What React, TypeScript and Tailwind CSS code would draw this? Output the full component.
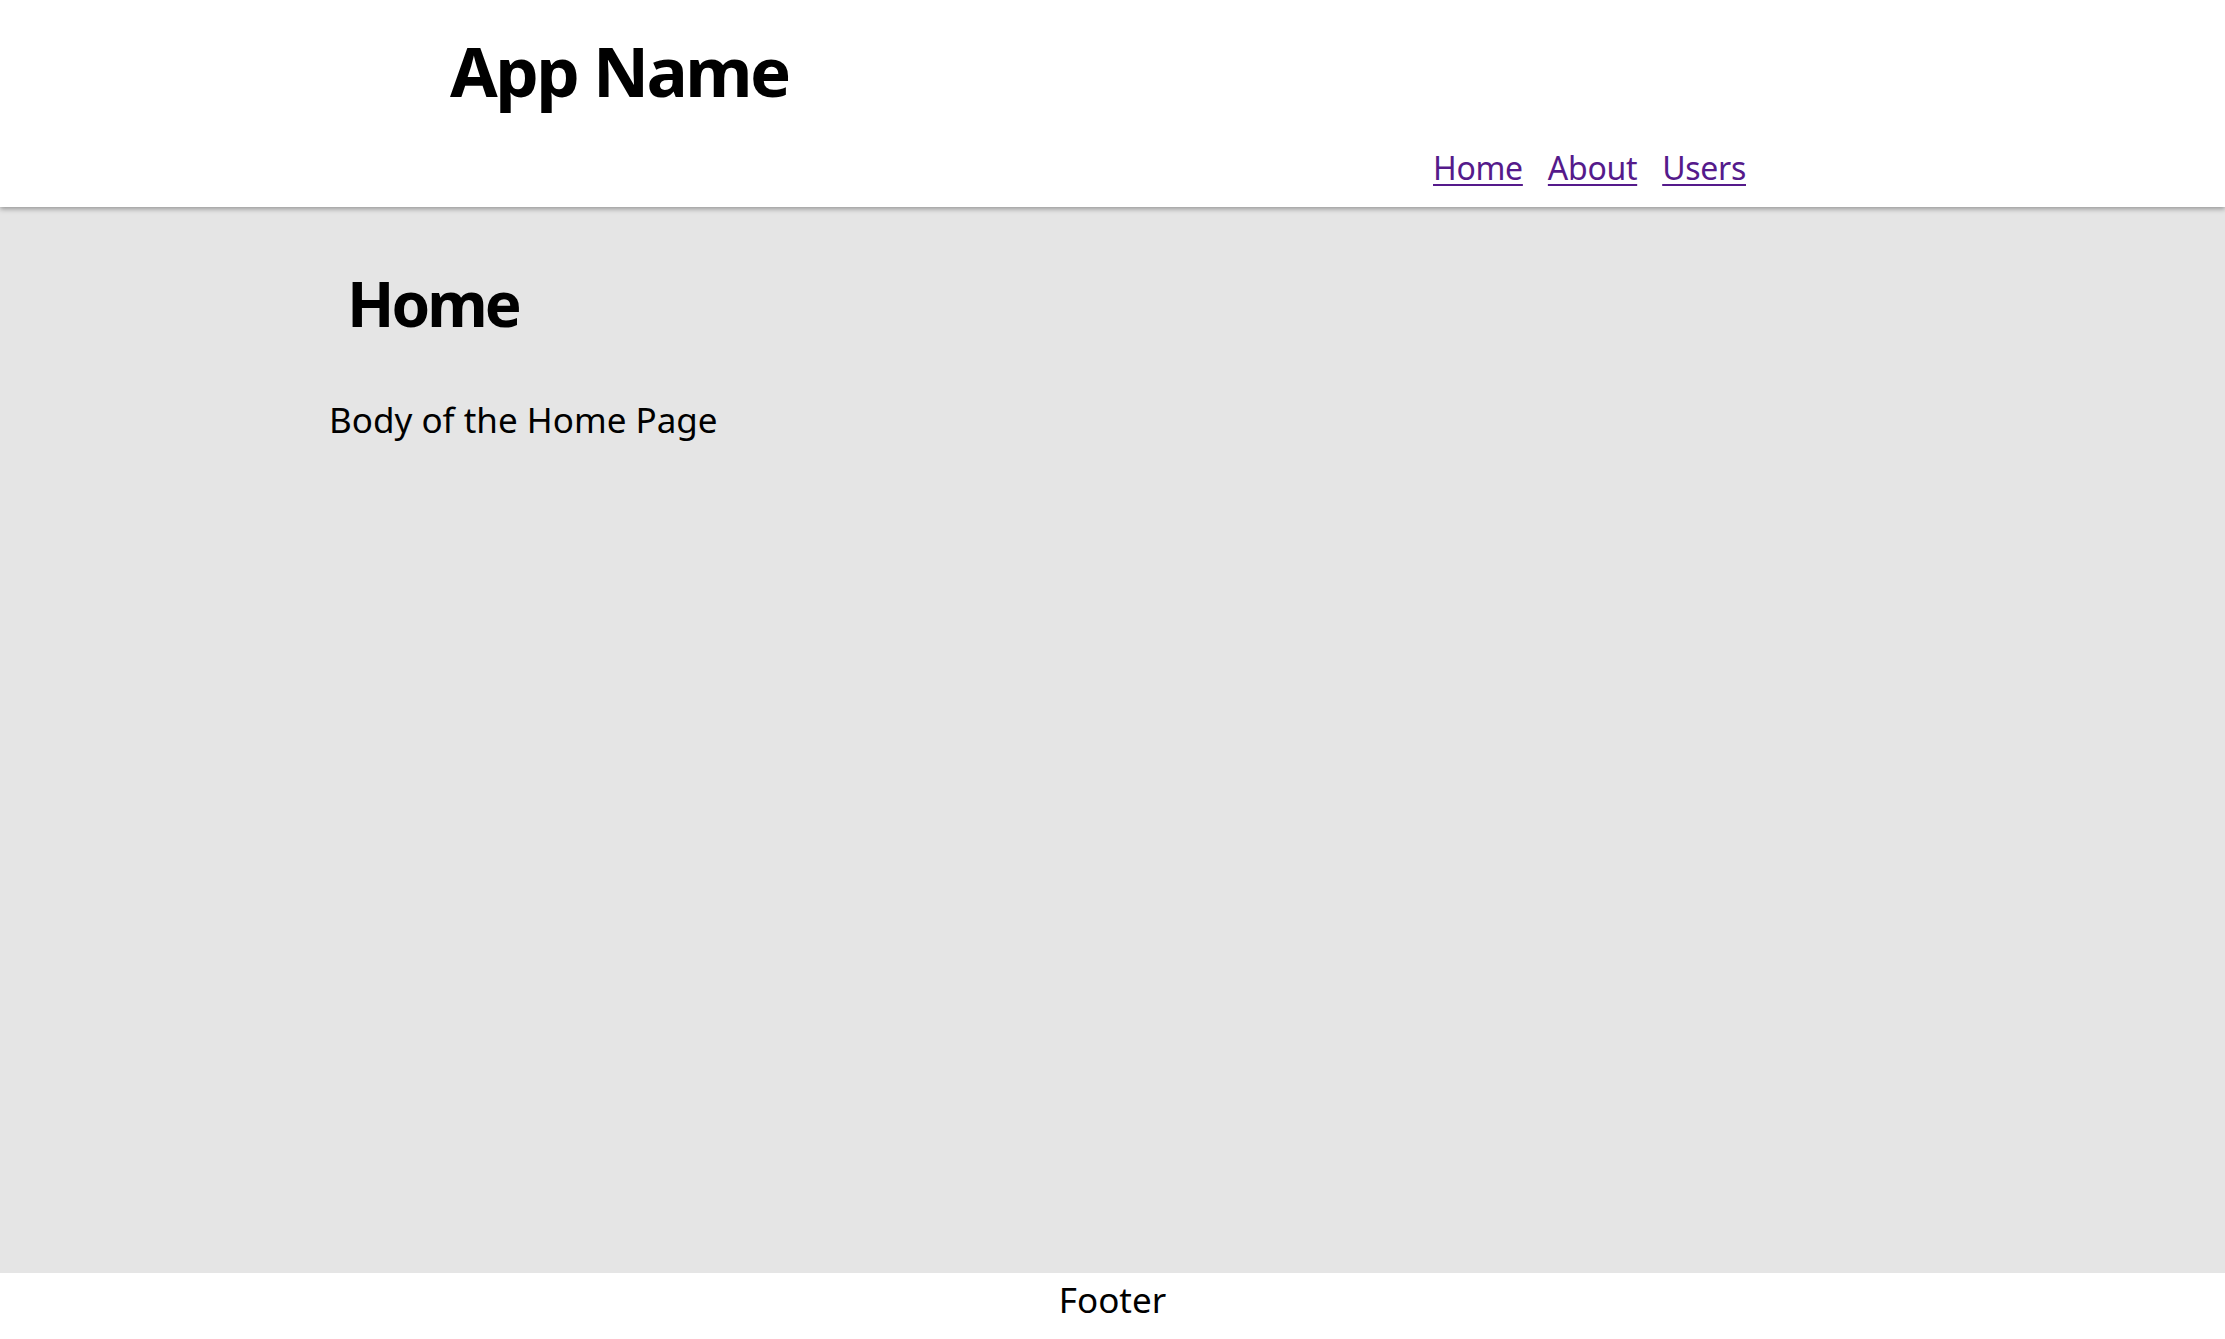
export default function App() {
  const links = ["Home", "About", "Users"];

  return (
    <div className="min-h-screen flex flex-col bg-white text-black font-['Noto_Sans','Segoe_UI',sans-serif]">
      {/* Header */}
      <header className="relative z-10 h-[207px] bg-white shadow-[0_2px_5px_rgba(0,0,0,0.35)]">
        <div className="pl-[450px] pr-[479px] pt-[36px] flex flex-col">
          <h1 className="text-[69px] font-bold leading-none tracking-[-2.5px]">App Name</h1>
          <nav className="mt-[47px] flex justify-end gap-[25px] text-[32px] leading-none tracking-[-0.3px]">
            {links.map((l) => (
              <a key={l} href="#" className="text-[#551a8b] underline underline-offset-[4px] decoration-[2px]">
                {l}
              </a>
            ))}
          </nav>
        </div>
      </header>

      {/* Main */}
      <main className="flex-1 bg-[#e5e5e5] pl-[329px]">
        <h2 className="mt-[65px] pl-[18px] text-[62px] font-bold leading-none tracking-[-3px]">Home</h2>
        <p className="mt-[68px] text-[35px] leading-none">Body of the Home Page</p>
      </main>

      {/* Footer */}
      <footer className="h-[66px] bg-white pt-[9px] text-center text-[35px] leading-none">
        Footer
      </footer>
    </div>
  );
}
